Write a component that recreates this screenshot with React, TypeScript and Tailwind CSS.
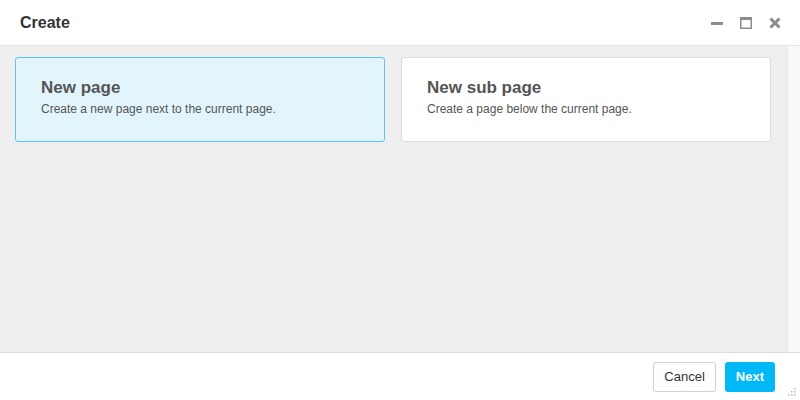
export default function App() {
  return (
    <div className="w-[800px] h-[400px] flex flex-col bg-white overflow-hidden font-['Helvetica','Liberation_Sans',Arial,sans-serif] text-[#555]">
      {/* header */}
      <div className="h-[46px] shrink-0 flex items-center justify-between pl-5 pr-[19px] border-b border-[#e3e3e3]">
        <h1 className="text-[16px] font-bold text-[#333]">Create</h1>
        <div className="flex items-center gap-[17px] text-[#8c8c8c]">
          <svg width="12" height="12" viewBox="0 0 12 12">
            <rect x="0" y="5" width="12" height="3" fill="currentColor" />
          </svg>
          <svg width="12" height="12" viewBox="0 0 12 12">
            <rect x="0.75" y="0.75" width="10.5" height="10.5" fill="none" stroke="currentColor" strokeWidth="1.5" />
            <rect x="0" y="0" width="12" height="3" fill="currentColor" />
          </svg>
          <svg width="12" height="12" viewBox="0 0 12 12">
            <path d="M1.5 1.5 L10.5 10.5 M10.5 1.5 L1.5 10.5" stroke="currentColor" strokeWidth="3" />
          </svg>
        </div>
      </div>

      {/* body */}
      <div className="flex-1 flex bg-[#efefef]">
        <div className="flex-1 grid grid-cols-2 gap-4 content-start pt-[11px] pl-[15px] pr-4">
          <div className="h-[85px] rounded-[3px] border border-[#5bc6f2] bg-[#e2f5fd] pl-[25px] pt-[19px]">
            <div className="text-[17px] font-bold leading-[22px] text-[#555]">New page</div>
            <div className="text-[12px] leading-[16px] mt-[2px] text-[#555]">Create a new page next to the current page.</div>
          </div>
          <div className="h-[85px] rounded-[3px] border border-[#dcdcdc] bg-white pl-[25px] pt-[19px]">
            <div className="text-[17px] font-bold leading-[22px] text-[#555]">New sub page</div>
            <div className="text-[12px] leading-[16px] mt-[2px] text-[#555]">Create a page below the current page.</div>
          </div>
        </div>
        <div className="w-[13px] bg-[#fafafa] border-l border-[#e6e6e6]" />
      </div>

      {/* footer */}
      <div className="h-[48px] shrink-0 relative flex items-center justify-end gap-[9px] pr-[25px] border-t border-[#dedede]">
        <button className="h-[30px] px-[10px] rounded-[3px] border border-[#cfcfcf] bg-white text-[13px] text-[#333]">Cancel</button>
        <button className="h-[30px] px-[11px] rounded-[3px] bg-[#00b8f5] text-[13px] font-bold text-white">Next</button>
        <svg className="absolute right-[3px] bottom-[3px]" width="10" height="10" viewBox="0 0 10 10" fill="#b5b5b5">
          <rect x="7" y="1" width="1.5" height="1.5" />
          <rect x="4" y="4" width="1.5" height="1.5" />
          <rect x="7" y="4" width="1.5" height="1.5" />
          <rect x="1" y="7" width="1.5" height="1.5" />
          <rect x="4" y="7" width="1.5" height="1.5" />
          <rect x="7" y="7" width="1.5" height="1.5" />
        </svg>
      </div>
    </div>
  )
}
